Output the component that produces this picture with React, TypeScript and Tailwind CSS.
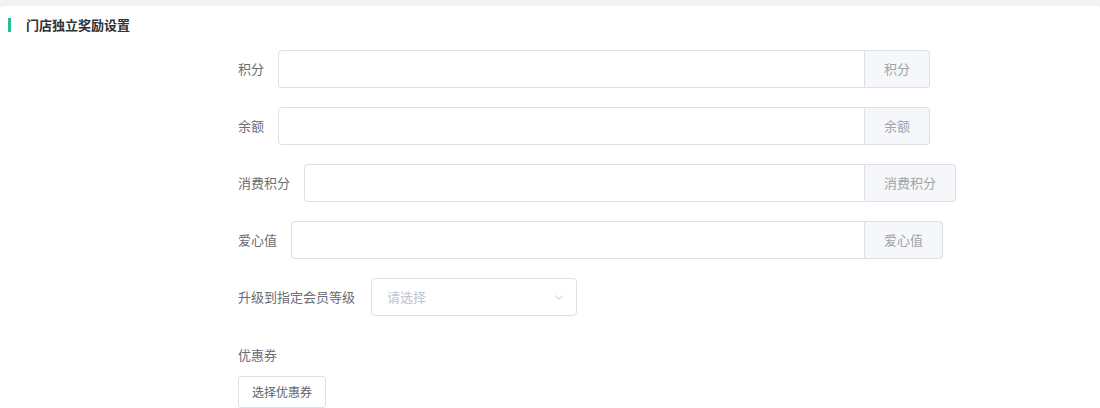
import React from "react";

function InputRow({ label, append }: { label: string; append: string }) {
  return (
    <div className="flex items-center h-[38px] mb-[19px]">
      <div className="flex items-center w-[627px] h-full">
        <span className="text-[13px] text-[#6a6d72] pr-[14px] whitespace-nowrap">{label}</span>
        <div className="flex-1 h-full border border-[#dcdfe6] rounded-l-[4px] bg-white" />
      </div>
      <div className="h-full flex items-center px-[19px] bg-[#f5f7fa] border border-l-0 border-[#dcdfe6] rounded-r-[4px] text-[13px] text-[#a0a3a9] whitespace-nowrap">
        {append}
      </div>
    </div>
  );
}

export default function App() {
  return (
    <div className="w-[1100px] h-[408px] bg-[#f0f2f5] pt-[6px] overflow-hidden font-['Noto_Sans_CJK_SC',sans-serif]">
      <div className="bg-white rounded-t-[4px] h-full">
        <div className="flex items-center pt-[12px] pl-[8px] h-[26px]">
          <div className="w-[3px] h-[14px] bg-[#20bf95]" />
          <span className="ml-[15px] text-[13px] font-bold text-[#303133] leading-[14px]">门店独立奖励设置</span>
        </div>
        <div className="pl-[238px] pt-[18px]">
          <InputRow label="积分" append="积分" />
          <InputRow label="余额" append="余额" />
          <InputRow label="消费积分" append="消费积分" />
          <InputRow label="爱心值" append="爱心值" />
          <div className="flex items-center h-[38px] mb-[19px]">
            <span className="text-[13px] text-[#6a6d72] pr-[16px] whitespace-nowrap">升级到指定会员等级</span>
            <div className="w-[206px] h-full border border-[#dcdfe6] rounded-[4px] flex items-center justify-between pl-[15px] pr-[10px]">
              <span className="text-[13px] text-[#c0c4cc]">请选择</span>
              <svg width="14" height="14" viewBox="0 0 14 14" fill="none">
                <path d="M3 5.5 L7 9 L11 5.5" stroke="#c0c4cc" strokeWidth="1" fill="none" />
              </svg>
            </div>
          </div>
          <div className="h-[40px] leading-[40px] text-[13px] text-[#6a6d72]">优惠券</div>
          <div className="mt-[1px]">
            <button className="h-[32px] px-[13px] border border-[#dcdfe6] rounded-[3px] bg-white text-[12px] text-[#606266]">
              选择优惠券
            </button>
          </div>
        </div>
      </div>
    </div>
  );
}
